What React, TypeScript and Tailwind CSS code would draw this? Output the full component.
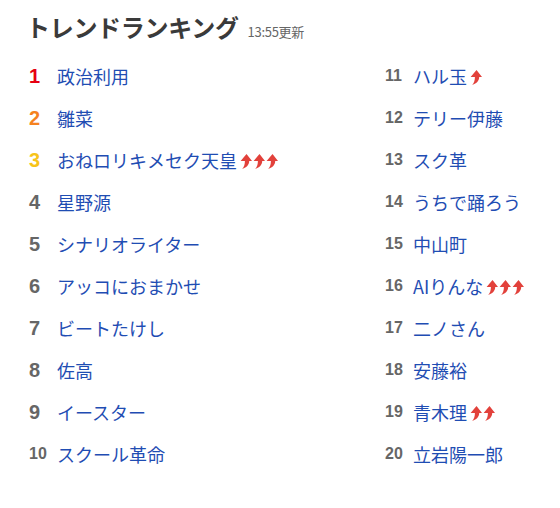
import React from 'react';

type Item = { rank: number; word: string; up?: number };

const left: Item[] = [
  { rank: 1, word: '政治利用' },
  { rank: 2, word: '雛菜' },
  { rank: 3, word: 'おねロリキメセク天皇', up: 3 },
  { rank: 4, word: '星野源' },
  { rank: 5, word: 'シナリオライター' },
  { rank: 6, word: 'アッコにおまかせ' },
  { rank: 7, word: 'ビートたけし' },
  { rank: 8, word: '佐高' },
  { rank: 9, word: 'イースター' },
  { rank: 10, word: 'スクール革命' },
];

const right: Item[] = [
  { rank: 11, word: 'ハル玉', up: 1 },
  { rank: 12, word: 'テリー伊藤' },
  { rank: 13, word: 'スク革' },
  { rank: 14, word: 'うちで踊ろう' },
  { rank: 15, word: '中山町' },
  { rank: 16, word: 'AIりんな', up: 3 },
  { rank: 17, word: '二ノさん' },
  { rank: 18, word: '安藤裕' },
  { rank: 19, word: '青木理', up: 2 },
  { rank: 20, word: '立岩陽一郎' },
];

const Arrow = () => (
  <svg width="12" height="15" viewBox="0 0 12 15" className="fill-[#e2413b]">
    <path d="M6.5 0 L12 7 L9.2 7 C9.2 10.5 7 13.3 2.2 15 C4.3 12.6 4.9 10 4.9 7 L0.6 7 Z" />
  </svg>
);

const rankColor = (r: number) =>
  r === 1 ? 'text-[#e60012]' : r === 2 ? 'text-[#f5821f]' : r === 3 ? 'text-[#f7c41a]' : 'text-[#666666]';

const Row = ({ item }: { item: Item }) => (
  <li className="flex items-center h-[42px]">
    <span
      className={`w-[28px] font-bold ${rankColor(item.rank)} ${item.rank < 10 ? 'text-[20px]' : 'text-[16px]'}`}
      style={{ fontFamily: '"Liberation Sans", Arial, sans-serif' }}
    >
      {item.rank}
    </span>
    <span className="text-[18px] text-[#1f4db3]">{item.word}</span>
    {item.up ? (
      <span className="flex ml-[3px] mt-[3px] gap-[1px]">
        {Array.from({ length: item.up }).map((_, i) => (
          <Arrow key={i} />
        ))}
      </span>
    ) : null}
  </li>
);

export default function App() {
  return (
    <div
      className="w-[560px] h-[508px] bg-white pt-[6px] pl-[26px]"
      style={{ fontFamily: '"Noto Sans CJK JP", "Liberation Sans", sans-serif' }}
    >
      <div className="flex items-end h-[39px]">
        <h1 className="text-[24px] font-bold text-[#3a3a3a] leading-[36px] tracking-[-0.3px]">トレンドランキング</h1>
        <span className="ml-[9px] mb-[7px] text-[13px] text-[#666666] leading-none tracking-[-0.3px]">13:55更新</span>
      </div>
      <div className="grid grid-cols-[356px_1fr] mt-[10px] pl-[3px]">
        <ul>
          {left.map((it) => (
            <Row key={it.rank} item={it} />
          ))}
        </ul>
        <ul>
          {right.map((it) => (
            <Row key={it.rank} item={it} />
          ))}
        </ul>
      </div>
    </div>
  );
}
